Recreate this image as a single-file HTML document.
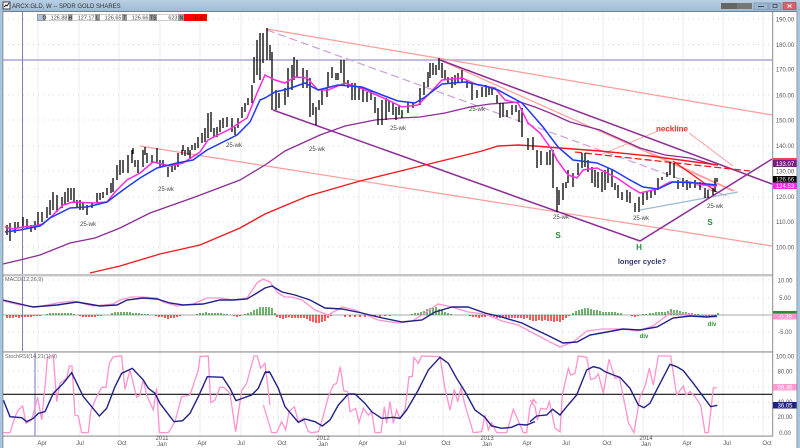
<!DOCTYPE html>
<html><head><meta charset="utf-8"><title>ARCX:GLD</title>
<style>
html,body{margin:0;padding:0;background:#fff;width:800px;height:448px;overflow:hidden}
svg{display:block;filter:blur(.3px)}
text{font-family:"Liberation Sans",sans-serif}
</style></head><body>
<svg width="800" height="448" viewBox="0 0 800 448" xmlns="http://www.w3.org/2000/svg">
<defs><linearGradient id="tb" x1="0" y1="0" x2="0" y2="1"><stop offset="0" stop-color="#b9cfe3"/><stop offset="1" stop-color="#9fbcd6"/></linearGradient></defs>
<rect width="800" height="448" fill="#fff"/>
<!-- grid -->
<path d="M38 12V436M79 12V436M119 12V436M160 12V436M200 12V436M241 12V436M278 12V436M319 12V436M359 12V436M400 12V436M443 12V436M483 12V436M523 12V436M562 12V436M603 12V436M643 12V436M683 12V436M723 12V436M763 12V436" stroke="#efefef" stroke-width="1.2" fill="none"/>
<path d="M3 19H772M3 44.5H772M3 69H772M3 95H772M3 120H772M3 146H772M3 171H772M3 197H772M3 222H772M3 247H772M3 280H772M3 298H772M3 332H772M3 371H772M3 387H772M3 402H772M3 417H772" stroke="#d4d4d4" stroke-width="1" stroke-dasharray="1 4" fill="none"/>
<!-- blue guide lines -->
<path d="M3 60H772" stroke="#a9a6d8" stroke-width="1.6"/>
<path d="M22.5 12V352" stroke="#7d7cc8" stroke-width="1"/>
<path d="M35 352V436" stroke="#a9a6d8" stroke-width="1.6"/>
<!-- trend lines -->
<g fill="none" stroke-width="1.2">
<path d="M267 29L772 115" stroke="#ff9a9a"/>
<path d="M140 146L772 246" stroke="#ff9a9a"/>
<path d="M267 30L730 197" stroke="#c9a0d8" stroke-dasharray="8 4"/>
<path d="M640 210L738 192" stroke="#9dbbd2"/>
<path d="M440 60L642 150L733 191" stroke="#ff9a9a"/>
<path d="M689 133L733 166" stroke="#ff9a9a" stroke-width=".9"/>
<path d="M658 131L600 155" stroke="#ff9a9a" stroke-width=".9"/>
<path d="M645 150L735 191" stroke="#ff9a9a" stroke-width=".9"/>
</g>
<g fill="none" stroke="#8d2c96" stroke-width="1.5">
<path d="M273 110L640 241L772 159"/>
<path d="M440 60L772 184"/>
<path stroke-width="1.3" d="M3 264L20 260L40 255L70 243L95 238L120 228L150 213L195 197L240 180L265 165L285 151L320 135L345 126L375 120L400 118L420 117L445 113L470 107L490 104L520 102L535 107L550 113L570 122L600 130L640 148L665 155L690 158L715 165"/>
</g>
<!-- red -->
<path d="M90 273L120 266L160 254L200 245L240 228L265 214L308 196L360 181L425 165L482 151L498 146L518 145L535 146L560 148L600 151L650 156L718 165" fill="none" stroke="#f5181c" stroke-width="1.4"/>
<path d="M575 152L750 171" fill="none" stroke="#f5181c" stroke-width="1.3" stroke-dasharray="7 3"/>
<path d="M673 161L717 192" fill="none" stroke="#f5181c" stroke-width="1.3"/>
<!-- bars -->
<path fill="none" stroke="#000" stroke-width="1.3" d="M7 225v10M10 223v18M15 222v11M18 222v6M23 217v11M27 219v9M31 225v7M35 221v9M38 212v13M42 212v10M47 207v11M50 200v15M53 192v18M57 195v17M62 197v11M65 192v13M68 188v14M71 188v12M74 188v15M77 200v7M80 200v10M83 203v7M87 205v10M92 202v6M97 193v9M100 193v7M103 192v6M107 188v7M111 183v10M113 178v14M117 165v15M120 160v15M123 160v13M128 155v18M132 150v13M133 148v6M135 160v7M138 160v13M143 150v17M145 147v8M147 153v10M152 155v8M157 148v15M160 160v8M163 160v7M168 167v10M172 165v7M175 163v7M178 153v14M182 150v5M183 145v6M185 150v6M188 147v8M190 150v8M192 145v5M195 143v7M198 137v11M202 133v10M205 128v14M208 113v25M211 112v20M214 128v9M217 127v10M220 120v12M223 118v10M227 117v10M232 118v14M235 127v8M238 118v10M242 107v11M245 103v9M248 98v7M252 85v18M254 57v26M257 40v35M260 33v47M263 33v30M267 28v32M270 45v15M272 52v58M276 90v20M279 93v15M285 88v17M288 68v29M292 65v25M294 57v23M297 60v17M303 68v20M307 70v18M310 78v39M313 103v12M316 107v18M319 100v10M322 90v15M327 88v9M328 72v16M332 67v11M336 73v7M338 73v7M341 60v13M344 60v25M348 80v8M352 83v17M355 83v17M359 87v13M363 88v14M367 92v10M371 90v10M375 97v16M378 108v17M382 100v25M386 98v22M389 100v12M393 102v13M396 107v13M399 105v10M402 110v8M408 102v11M413 102v6M420 88v17M424 82v13M428 72v15M430 63v15M433 63v12M436 65v10M439 58v12M442 63v15M445 70v10M448 77v6M452 77v11M455 75v10M458 73v9M462 70v12M467 80v8M472 83v17M477 90v8M482 87v10M486 85v12M489 87v8M492 87v8M497 95v8M500 103v15M503 103v14M507 110v7M512 105v10M516 105v7M519 110v12M522 108v29M528 138v12M533 137v13M537 150v18M541 151v14M547 152v13M550 150v15M553 150v38M557 187v25M559 190v15M563 183v17M566 182v6M568 170v13M573 173v14M578 163v12M582 153v15M585 153v14M588 160v12M592 167v16M595 170v17M598 172v16M602 172v20M605 170v20M608 168v15M612 170v17M615 183v7M618 185v13M622 192v8M627 190v12M630 192v11M635 203v9M639 197v15M643 193v12M647 192v8M651 190v8M655 190v5M658 178v12M662 177v3M667 172v5M670 162v13M674 163v15M678 180v9M683 178v9M687 180v10M690 182v6M695 180v8M700 182v8M705 188v10M708 190v8M713 188v7M715 178v14M717 178v4"/>
<!-- moving averages -->
<g fill="none" stroke-width="1.5">
<path stroke="#ff28e0" d="M5 227L13 229L23 227L33 226L43 224L53 215L63 205L73 202L93 203L107 202L115 192L127 180L140 173L153 162L170 166L183 163L200 152L208 140L230 129L247 118L257 93L265 75L275 80L285 83L295 77L307 78L318 90L328 90L345 83L358 87L372 93L388 100L402 107L418 105L428 95L442 80L462 78L478 85L495 88L505 100L518 103L528 123L540 133L552 150L557 160L568 175L577 178L583 170L597 168L617 178L630 187L640 193L657 189L670 182L690 182L703 185L717 186"/>
<path stroke="#1f3af0" d="M5 232L20 230L40 226L50 218L70 208L87 207L107 202L123 190L140 178L157 168L177 163L193 160L207 150L237 135L250 122L260 100L265 98L275 92L288 89L305 83L318 90L338 85L362 87L382 95L398 101L415 103L425 97L442 84L465 82L485 86L498 90L522 103L530 112L543 127L558 147L573 160L597 163L613 170L630 180L643 187L658 189L673 182L697 183L717 185"/>
</g>
<!-- separators -->
<rect x="3" y="274" width="770" height="2.4" fill="#c4c4c4"/>
<rect x="3" y="351" width="770" height="1.8" fill="#b8b8b8"/>
<rect x="3" y="435.5" width="770" height="1.2" fill="#999"/>
<!-- MACD histogram -->
<path d="M3 315H772" stroke="#a8a8a8" stroke-width="1"/>
<path fill="none" stroke="#f00" stroke-width="1.3" d="M7 315v3M10 315v3M13 315v3M16 315v2M19 315v3M22 315v2M25 315v2M28 315v2M31 315v2M34 315v1M37 315v1M40 315v1M80 315v1M83 315v2M86 315v2M89 315v2M92 315v2M95 315v2M98 315v1M101 315v1M156 315v1M159 315v2M162 315v2M165 315v3M168 315v4M171 315v3M174 315v3M177 315v2M180 315v1M234 315v1M237 315v2M240 315v1M277 315v2M280 315v3M283 315v4M286 315v3M289 315v2M292 315v3M295 315v3M298 315v3M301 315v3M304 315v3M307 315v4M310 315v6M313 315v7M316 315v8M319 315v8M322 315v7M325 315v6M328 315v3M331 315v1M345 315v2M350 315v2M355 315v2M360 315v2M365 315v2M370 315v2M375 315v2M380 315v2M385 315v1M390 315v1M470 315v1M473 315v2M476 315v2M479 315v3M482 315v2M485 315v2M488 315v1M491 315v2M494 315v2M497 315v3M500 315v3M503 315v3M506 315v3M509 315v3M512 315v3M515 315v3M518 315v3M521 315v3M524 315v4M527 315v3M530 315v5M533 315v6M536 315v6M539 315v5M542 315v6M545 315v5M548 315v6M551 315v6M554 315v7M557 315v6M560 315v7M563 315v5M566 315v3M569 315v1M632 315v1M635 315v2M638 315v1M700 315v1M703 315v1M706 315v2M709 315v2M712 315v2M715 315v2"/>
<path fill="none" stroke="#1f8a1f" stroke-width="1.3" d="M47 315v-1M50 315v-2M53 315v-2M56 315v-2M59 315v-2M62 315v-2M65 315v-2M68 315v-2M71 315v-2M74 315v-1M112 315v-2M115 315v-3M118 315v-3M121 315v-3M124 315v-3M127 315v-3M130 315v-3M133 315v-2M136 315v-2M139 315v-2M142 315v-1M145 315v-1M148 315v-1M197 315v-1M200 315v-2M203 315v-2M206 315v-3M209 315v-2M212 315v-2M215 315v-2M218 315v-2M221 315v-2M224 315v-1M227 315v-1M245 315v-1M248 315v-2M251 315v-3M254 315v-5M257 315v-6M260 315v-8M263 315v-8M266 315v-8M269 315v-8M272 315v-7M275 315v-2M412 315v-1M415 315v-2M418 315v-2M421 315v-3M424 315v-4M427 315v-6M430 315v-7M433 315v-7M436 315v-8M439 315v-6M442 315v-5M445 315v-3M448 315v-2M451 315v-1M573 315v-2M576 315v-4M579 315v-5M582 315v-6M585 315v-7M588 315v-7M591 315v-6M594 315v-5M597 315v-5M600 315v-4M603 315v-3M606 315v-3M609 315v-3M612 315v-3M615 315v-3M618 315v-2M621 315v-2M643 315v-1M646 315v-1M650 315v-2M653 315v-2M656 315v-3M659 315v-3M662 315v-3M665 315v-3M668 315v-4M671 315v-6M674 315v-5M677 315v-5M680 315v-4M683 315v-3M686 315v-3M689 315v-2M692 315v-2M695 315v-1M698 315v-1M718 315v-2"/>
<!-- MACD lines -->
<path fill="none" stroke="#ff92cf" stroke-width="1.3" d="M3 301L20 305L37 307L57 303L73 301L93 306L113 304L120 300L132 297L143 297L157 298L163 302L177 306L193 304L207 298L220 298L233 300L247 298L257 283L263 279L270 282L278 293L285 297L292 297L302 300L315 310L328 315L342 307L355 310L378 320L398 323L412 321L425 313L438 304L452 307L468 312L485 314L502 321L518 325L535 334L550 342L560 347L573 342L587 331L603 329L623 329L637 331L653 326L670 313L683 314L700 316L710 317L717 317"/>
<path fill="none" stroke="#20208a" stroke-width="1.4" d="M3 300L20 304L33 307L57 305L77 302L100 306L117 305L127 300L143 298L157 299L170 303L183 305L203 304L220 300L233 300L247 299L257 293L265 288L272 286L282 292L295 295L310 300L325 308L342 309L362 313L378 317L402 322L422 320L435 312L452 307L468 307L485 313L498 316L522 323L530 327L547 335L563 343L577 342L590 335L607 332L623 329L640 330L657 327L673 318L690 316L707 317L717 316"/>
<!-- Stoch -->
<path d="M3 394.3H772" stroke="#111" stroke-width="1.1"/>
<g fill="none" stroke="#ff92cf" stroke-width="3.9">
<polyline transform="translate(0,300) scale(.3333)" points="10,398 30,398 45,350 55,330 68,318 78,370 95,360 113,292 125,360 137,240 142,175 150,168 160,168 170,305 180,250 200,235 208,198 216,198 225,345 235,348 245,398 265,398 272,335 290,290 305,262 318,262 328,190 340,170 365,168 375,268 390,210 410,292 420,285 430,238 440,285 460,330 470,265 478,398 505,398 525,365 545,290 570,285 595,210 600,170 625,168 632,308 645,300 660,262 672,262 690,280 707,395 725,272 740,250 762,168 772,168 782,205 795,190 810,315"/>
<polyline transform="translate(265,300) scale(.3333)" points="-5,315 20,398 35,398 50,365 62,390 72,335 88,320 100,365 115,355 130,395 140,398 160,395 170,365 190,290 205,255 215,250 226,200 236,272 248,275 255,335 272,325 282,368 295,325 310,345 320,335 330,398 348,398 358,320 365,370 375,305 385,370 395,330 405,355 420,330 432,230 442,230 447,172 460,190 470,168 525,170 540,265 555,330 568,268 578,305 588,262 600,315 625,398 650,395 660,345 670,390 680,368 695,398 725,398 745,328 775,398 785,398 795,320 805,298 815,310"/>
<polyline transform="translate(530,300) scale(.3333)" points="0,300 15,320 22,360 32,325 50,328 58,305 75,385 90,395 97,285 115,205 122,225 135,220 145,168 170,172 182,238 195,235 205,222 220,280 237,178 255,235 268,232 285,315 295,368 312,398 330,290 345,260 358,205 370,255 385,168 422,168 440,285 460,258 468,285 480,275 495,290 512,315 525,398 535,398 550,265 560,262"/>
</g>
<g fill="none" stroke="#20208a" stroke-width="4.2">
<polyline transform="translate(0,300) scale(.3333)" points="10,300 30,350 65,353 80,365 100,355 115,340 135,335 160,280 190,250 215,218 250,290 298,348 320,325 345,260 365,220 397,205 430,240 445,265 465,280 480,310 522,365 548,362 570,340 595,290 622,230 668,232 690,265 708,302 755,285 775,265 795,218 810,215"/>
<polyline transform="translate(265,300) scale(.3333)" points="0,215 15,218 40,265 60,320 100,367 120,357 150,365 172,378 195,360 220,315 250,282 270,282 300,310 320,335 350,355 385,352 405,355 425,330 460,270 490,210 525,172 550,190 575,235 600,275 630,330 660,352 680,378 710,385 740,382 760,373 785,375 810,365"/>
<polyline transform="translate(530,300) scale(.3333)" points="0,365 20,348 50,345 68,328 90,345 110,320 140,285 170,210 190,200 210,205 225,215 250,225 270,232 300,265 325,315 342,323 360,310 380,270 420,193 440,200 460,212 490,250 520,290 542,320 562,316"/>
</g>
<!-- annotations -->
<g font-size="6" fill="#444" text-anchor="middle">
<text x="88" y="226">25-wk</text><text x="166" y="191">25-wk</text><text x="234" y="147">25-wk</text><text x="317" y="151">25-wk</text><text x="398" y="130">25-wk</text><text x="477" y="111">25-wk</text><text x="561" y="219">25-wk</text><text x="641" y="220">25-wk</text><text x="715" y="208">25-wk</text>
</g>
<text x="672" y="131.500" font-size="8" font-weight="bold" fill="#f5282c" text-anchor="middle">neckline</text>
<g font-size="8" font-weight="bold" fill="#2f8a3a" text-anchor="middle"><text x="558" y="238">S</text><text x="639" y="250">H</text><text x="710" y="225">S</text></g>
<text x="642" y="264" font-size="7.500" font-weight="bold" fill="#333a70" text-anchor="middle">longer cycle?</text>
<g font-size="6" font-weight="bold" fill="#2f8a3a" text-anchor="middle"><text x="644" y="338">div</text><text x="712" y="326">div</text></g>
<text x="5" y="281" font-size="5.500" fill="#666">MACD(12,26,9)</text>
<text x="5" y="358" font-size="5.500" fill="#666">StochRSI(14,21(1),9)</text>
<!-- right axis -->
<rect x="773" y="12" width="24" height="424" fill="#fff"/>
<rect x="772.2" y="12" width="1" height="424" fill="#8a8a8a"/>
<g font-size="6" fill="#555" text-anchor="middle">
<text x="785" y="21.500">190.00</text><text x="785" y="47">180.00</text><text x="785" y="71.500">170.00</text><text x="785" y="97.500">160.00</text><text x="785" y="122.500">150.00</text><text x="785" y="148">140.00</text><text x="785" y="173.500">130.00</text><text x="785" y="199">120.00</text><text x="785" y="224">110.00</text><text x="785" y="249.500">100.00</text>
<text x="785" y="282.500">10.00</text><text x="785" y="300">5.00</text><text x="785" y="334">-5.00</text>
<text x="785" y="358.500">100.00</text><text x="785" y="373.500">80.00</text><text x="785" y="404">40.00</text><text x="785" y="419">20.00</text><text x="785" y="435">0.00</text>
</g>
<g font-size="6" text-anchor="middle">
<rect x="773" y="158" width="24" height="2" fill="#f04050"/>
<rect x="773" y="160" width="24" height="7" fill="#7a1c80"/><text x="785" y="166" fill="#fff">133.07</text>
<rect x="773" y="176" width="24" height="6.500" fill="#000"/><text x="785" y="181.500" fill="#ddd">126.66</text>
<rect x="773" y="182.500" width="24" height="6.500" fill="#ff28e0"/><text x="785" y="188" fill="#fff">124.53</text>
<rect x="773" y="311" width="24" height="2.500" fill="#2f8a2f"/>
<rect x="773" y="313.500" width="24" height="6" fill="#ff92cf"/><text x="785" y="318.500" fill="#fff">-0.39</text>
<rect x="773" y="384" width="24" height="6.500" fill="#ff9ad2"/><text x="785" y="389.500" fill="#fff">59.45</text>
<rect x="773" y="402" width="24" height="6.500" fill="#20208a"/><text x="785" y="407.500" fill="#fff">36.05</text>
</g>
<!-- dates -->
<g font-size="6" fill="#555" text-anchor="middle">
<text x="42" y="445">Apr</text><text x="80" y="445">Jul</text><text x="122" y="445">Oct</text><text x="162" y="440">2011</text><text x="162" y="446">Jan</text><text x="202" y="445">Apr</text><text x="241" y="445">Jul</text><text x="282" y="445">Oct</text><text x="323" y="440">2012</text><text x="323" y="446">Jan</text><text x="363" y="445">Apr</text><text x="402" y="445">Jul</text><text x="446" y="445">Oct</text><text x="487" y="440">2013</text><text x="487" y="446">Jan</text><text x="527" y="445">Apr</text><text x="566" y="445">Jul</text><text x="607" y="445">Oct</text><text x="646" y="440">2014</text><text x="646" y="446">Jan</text><text x="687" y="445">Apr</text><text x="727" y="445">Jul</text><text x="767" y="445">Oct</text>
</g>
<!-- window frame -->
<rect x="0" y="0" width="800" height="11" fill="url(#tb)"/>
<rect x="0" y="11" width="800" height="1" fill="#6f7f8e"/>
<rect x="0" y="11" width="3" height="437" fill="#a9c4dc"/>
<rect x="2.500" y="11" width=".8" height="437" fill="#6f7f8e"/>
<rect x="797" y="11" width="3" height="437" fill="#a9c4dc"/>
<rect x="796.500" y="11" width=".8" height="437" fill="#8090a0"/>
<rect x="3" y="2" width="7" height="7" fill="#fff" stroke="#444" stroke-width="1"/>
<path d="M4 7L6 5L7 6L9 3" fill="none" stroke="#222" stroke-width="1"/>
<text x="12" y="8" font-size="6" fill="#333">ARCX:GLD, W -- SPDR GOLD SHARES</text>
<!-- top right buttons -->
<rect x="721" y="3" width="16" height="6" fill="#666"/><rect x="737" y="3" width="15" height="6" fill="#777"/>
<rect x="754" y="3" width="14" height="6.500" fill="#9db7d0" stroke="#6f8aa5" stroke-width=".6"/><path d="M758 6.500h6" stroke="#445" stroke-width="1"/>
<rect x="769" y="3" width="12" height="6.500" fill="#9db7d0" stroke="#6f8aa5" stroke-width=".6"/><rect x="773" y="4.500" width="4" height="3" fill="none" stroke="#445" stroke-width=".8"/>
<rect x="783" y="2.500" width="13" height="7" fill="#d8626a" stroke="#a04048" stroke-width=".6"/><path d="M787.500 4.500l4 3M791.500 4.500l-4 3" stroke="#fff" stroke-width="1"/>
<!-- values bar -->
<rect x="37" y="14" width="170" height="7" fill="#9a9a9a"/>
<rect x="38" y="15" width="5" height="5" fill="#a9c4dc"/>
<g fill="#fff"><rect x="45.500" y="14.500" width="22.500" height="6"/><rect x="72.500" y="14.500" width="22.500" height="6"/><rect x="100" y="14.500" width="22" height="6"/><rect x="127" y="14.500" width="22" height="6"/><rect x="157" y="14.500" width="21" height="6"/></g>
<rect x="184" y="14" width="23" height="7" fill="#f00"/>
<g font-size="5" fill="#222"><text x="42.500" y="19.500">O</text><text x="68.500" y="19.500">H</text><text x="96" y="19.500">L</text><text x="123" y="19.500">T</text><text x="150" y="19.500">TS</text><text x="179.500" y="19.500">N</text></g>
<g font-size="5.500" fill="#444" text-anchor="end"><text x="67.500" y="19.500">126.88</text><text x="94.500" y="19.500">127.17</text><text x="121.500" y="19.500">126.65</text><text x="148.500" y="19.500">126.66</text><text x="177.500" y="19.500">623</text><text x="206" y="19.500" fill="#700">-0.87</text></g>
</svg>
</body></html>
